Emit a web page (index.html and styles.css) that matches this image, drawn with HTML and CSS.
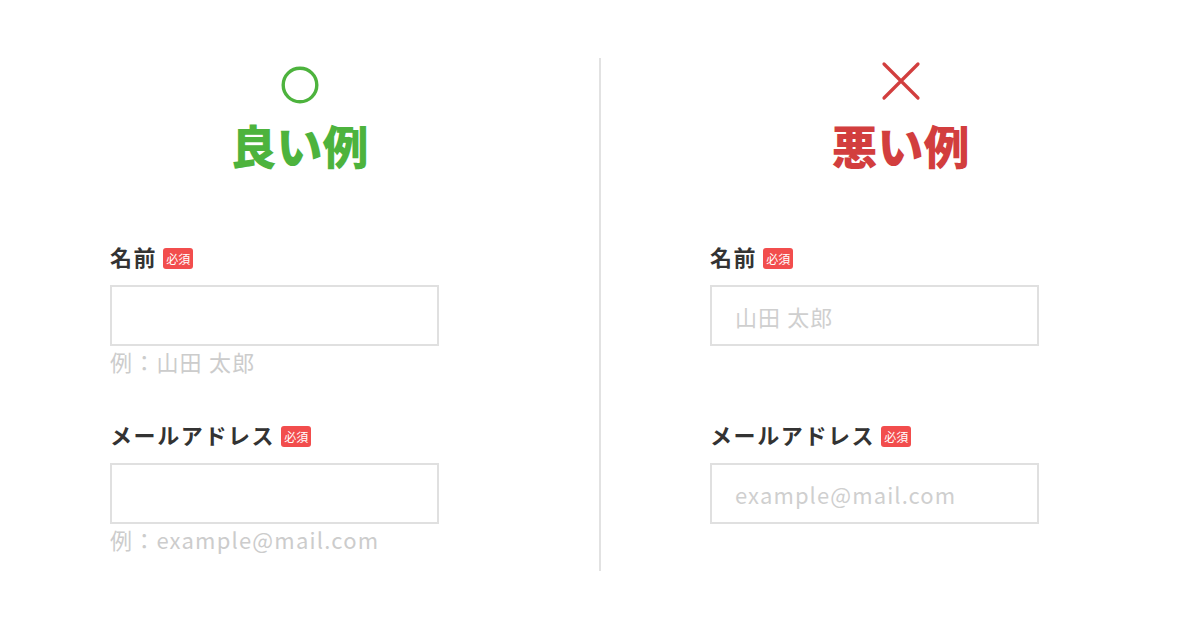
FILE: index.html
```html
<!DOCTYPE html>
<html lang="ja">
<head>
<meta charset="utf-8">
<title>良い例・悪い例</title>
<link rel="stylesheet" href="styles.css">
</head>
<body>
<div class="page">
  <section class="col col-left">
    <div class="head">
      <svg class="mark" width="40" height="40" viewBox="0 0 40 40"><circle cx="20" cy="20" r="16.8" fill="none" stroke="#4db33d" stroke-width="3.4"/></svg>
      <h1 class="title good">良い例</h1>
    </div>
    <div class="form">
      <div class="field">
        <div class="label">名前<span class="badge">必須</span></div>
        <div class="input"></div>
        <div class="hint">例：山田 太郎</div>
      </div>
      <div class="field">
        <div class="label">メールアドレス<span class="badge">必須</span></div>
        <div class="input"></div>
        <div class="hint">例：example@mail.com</div>
      </div>
    </div>
  </section>
  <div class="divider"></div>
  <section class="col col-right">
    <div class="head">
      <svg class="mark mark-x" width="40" height="40" viewBox="0 0 40 40"><path d="M3 3 L37 37 M37 3 L3 37" fill="none" stroke="#d23e3e" stroke-width="3.2" stroke-linecap="round"/></svg>
      <h1 class="title bad">悪い例</h1>
    </div>
    <div class="form">
      <div class="field">
        <div class="label">名前<span class="badge">必須</span></div>
        <div class="input"><span class="ph">山田 太郎</span></div>
        <div class="hint"></div>
      </div>
      <div class="field">
        <div class="label">メールアドレス<span class="badge">必須</span></div>
        <div class="input"><span class="ph">example@mail.com</span></div>
        <div class="hint"></div>
      </div>
    </div>
  </section>
</div>
</body>
</html>
```
FILE: styles.css
```css
html, body {
  margin: 0;
  padding: 0;
  background: #fff;
}
body {
  font-family: "Noto Sans CJK JP", "Noto Sans", sans-serif;
  color: #333;
}
.page {
  display: flex;
  width: 1200px;
  height: 629px;
}
.col {
  display: flex;
  flex-direction: column;
}
.col-left {
  width: 599px;
}
.col-right {
  width: 599px;
}
.divider {
  width: 2px;
  background: #e2e2e2;
  margin-top: 58px;
  height: 513px;
}
.head {
  display: flex;
  flex-direction: column;
  align-items: center;
  padding-top: 65px;
}
.mark {
  display: block;
}
.mark-x {
  margin-top: -4px;
  margin-bottom: 4px;
}
.title {
  margin: 14px 0 0;
  font-size: 46px;
  line-height: 50px;
  font-weight: 900;
  letter-spacing: 0;
}
.good { color: #4db33d; }
.bad { color: #d23e3e; }
.form {
  padding-top: 74px;
  display: flex;
  flex-direction: column;
  gap: 45px;
}
.col-left .form {
  padding-left: 110px;
}
.col-right .form {
  padding-left: 109px;
}
.field {
  display: flex;
  flex-direction: column;
}
.label {
  font-size: 22px;
  font-weight: 700;
  line-height: 26px;
  letter-spacing: 1.6px;
  display: flex;
  align-items: center;
  color: #333;
}
.badge {
  display: inline-block;
  margin-left: 6px;
  margin-top: 4px;
  background: #f24d4d;
  color: #fff;
  font-size: 12px;
  font-weight: 400;
  letter-spacing: 0;
  line-height: 21px;
  height: 21px;
  padding: 0 3px;
  border-radius: 3px;
}
.input {
  margin-top: 16px;
  width: 302px;
  height: 57px;
  border: 2px solid #e0e0e0;
  display: flex;
  align-items: center;
  padding-left: 23px;
}
.ph {
  font-size: 22px;
  letter-spacing: 1.1px;
  color: #cfcfcf;
}
.hint {
  font-size: 22px;
  letter-spacing: 1.2px;
  line-height: 30px;
  height: 30px;
  color: #cccccc;
}
```
